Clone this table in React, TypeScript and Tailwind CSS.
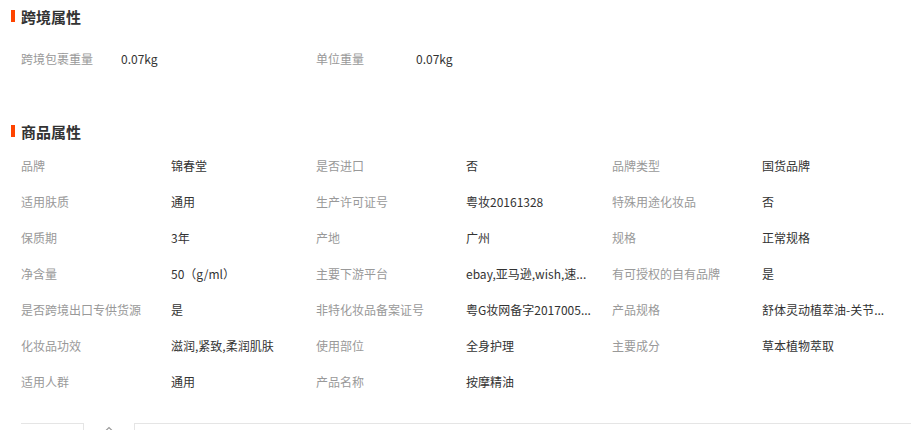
import React from "react";

const font = { fontFamily: '"Noto Sans CJK SC", "Microsoft YaHei", sans-serif' };

function Title({ children }: { children: React.ReactNode }) {
  return (
    <div className="flex items-center h-[32px]">
      <span className="ml-[11px] w-[4px] h-[12px] bg-[#ff4400]" />
      <span className="ml-[6px] text-[15px] font-bold text-[#333] leading-none">{children}</span>
    </div>
  );
}

const cross = [
  ["跨境包裹重量", "0.07kg"],
  ["单位重量", "0.07kg"],
];

const props: [string, string][] = [
  ["品牌", "锦春堂"],
  ["是否进口", "否"],
  ["品牌类型", "国货品牌"],
  ["适用肤质", "通用"],
  ["生产许可证号", "粤妆20161328"],
  ["特殊用途化妆品", "否"],
  ["保质期", "3年"],
  ["产地", "广州"],
  ["规格", "正常规格"],
  ["净含量", "50（g/ml）"],
  ["主要下游平台", "ebay,亚马逊,wish,速..."],
  ["有可授权的自有品牌", "是"],
  ["是否跨境出口专供货源", "是"],
  ["非特化妆品备案证号", "粤G妆网备字2017005..."],
  ["产品规格", "舒体灵动植萃油-关节..."],
  ["化妆品功效", "滋润,紧致,柔润肌肤"],
  ["使用部位", "全身护理"],
  ["主要成分", "草本植物萃取"],
  ["适用人群", "通用"],
  ["产品名称", "按摩精油"],
];

export default function App() {
  return (
    <div className="w-[911px] h-[430px] bg-white overflow-hidden relative" style={font}>
      <div className="pt-0">
        <Title>跨境属性</Title>
        <div className="mt-[9px] ml-[21px] grid grid-cols-[295px_295px_1fr] text-[12px]">
          {cross.map(([k, v]) => (
            <div key={k} className="flex items-center h-[36px]">
              <span className="w-[100px] text-[#999]">{k}</span>
              <span className="text-[#333]">{v}</span>
            </div>
          ))}
        </div>
        <div className="mt-[38px]">
          <Title>商品属性</Title>
        </div>
        <div className="mt-[1px] ml-[21px] grid grid-cols-[295px_296px_1fr] text-[12px]">
          {props.map(([k, v]) => (
            <div key={k} className="flex items-center h-[36px]">
              <span className="w-[150px] shrink-0 text-[#999] whitespace-nowrap">{k}</span>
              <span className="text-[#333] whitespace-nowrap">{v}</span>
            </div>
          ))}
        </div>
      </div>
      <div className="absolute left-0 top-[423px] w-full flex">
        <div className="ml-[21px] w-[63px] h-[10px] border-t border-r border-[#e5e5e5]" />
        <div className="w-[50px] flex justify-center pt-[1px]">
          <svg width="10" height="8" viewBox="0 0 10 8" className="mt-[1px]">
            <path d="M1.5 6 L5 2.5 L8.5 6" fill="none" stroke="#999" strokeWidth="1.2" />
          </svg>
        </div>
        <div className="flex-1 h-[10px] border-t border-l border-[#e5e5e5]" />
      </div>
    </div>
  );
}
